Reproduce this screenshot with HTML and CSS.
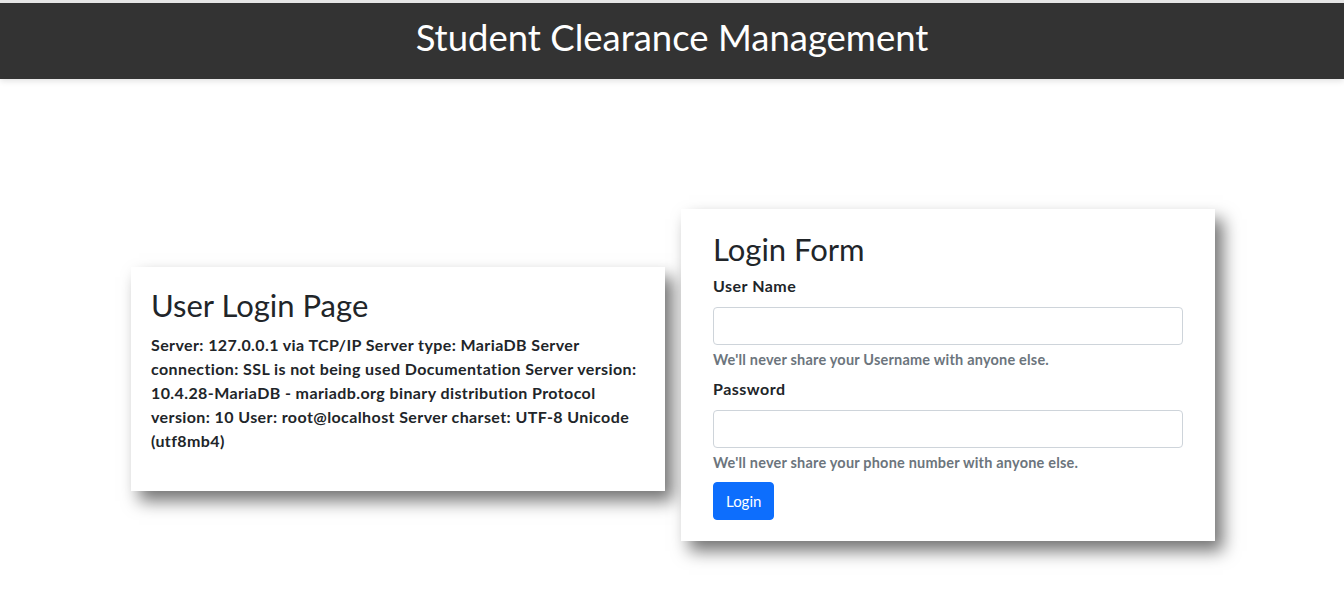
FILE: index.html
```html
<!DOCTYPE html>
<html lang="en">
<head>
<meta charset="utf-8">
<title>Student Clearance Management</title>
<link rel="stylesheet" href="styles.css">
</head>
<body>
<header class="topbar">
  <h1 class="topbar-title">Student Clearance Management</h1>
</header>
<main class="main">
  <div class="row">
    <section class="card card-info">
      <h2 class="card-title">User Login Page</h2>
      <p class="info-text">Server: 127.0.0.1 via TCP/IP Server type: MariaDB Server connection: SSL is not being used Documentation Server version: 10.4.28-MariaDB - mariadb.org binary distribution Protocol version: 10 User: root@localhost Server charset: UTF-8 Unicode (utf8mb4)</p>
    </section>
    <section class="card card-form">
      <h2 class="card-title">Login Form</h2>
      <form class="form">
        <div class="field">
          <label class="label" for="user">User Name</label>
          <input class="input" id="user" type="text">
          <div class="help">We'll never share your Username with anyone else.</div>
        </div>
        <div class="field">
          <label class="label" for="pass">Password</label>
          <input class="input" id="pass" type="password">
          <div class="help">We'll never share your phone number with anyone else.</div>
        </div>
        <button class="btn" type="button">Login</button>
      </form>
    </section>
  </div>
</main>
</body>
</html>
```
FILE: styles.css
```css
* { box-sizing: border-box; }
html, body { margin: 0; padding: 0; }
body {
  font-family: Lato, "Open Sans", sans-serif;
  color: #212529;
  background: #fff;
  border-top: 3px solid #e6e6e6;
  min-height: 100vh;
}
.topbar {
  background: #333333;
  height: 76px;
  display: flex;
  align-items: center;
  justify-content: center;
  padding-bottom: 7px;
  box-shadow: 0 2px 6px rgba(0,0,0,0.12);
}
.topbar-title {
  margin: 0;
  color: #fff;
  font-weight: 400;
  font-size: 36.5px;
  line-height: 1;
}
.main {
  padding-top: 130px;
  padding-left: 2px;
  padding-bottom: 50px;
}
.row {
  display: flex;
  justify-content: center;
  align-items: center;
  gap: 16px;
}
.card {
  width: 534px;
  background: #fff;
  box-shadow: 8px 10px 16px rgba(0,0,0,0.55);
}
.card-info {
  padding: 20px 20px 38px;
  margin-top: 8px;
  position: relative;
  z-index: 0;
}
.card-info .card-title { margin-bottom: 9px; }
.card-form {
  padding: 22px 32px 21px;
  position: relative;
  z-index: 1;
}
.card-title {
  margin: 0 0 6px;
  font-weight: 400;
  font-size: 31px;
  line-height: 1.2;
}
.info-text {
  margin: 0;
  font-weight: 700;
  font-size: 16px;
  letter-spacing: 0.4px;
  line-height: 24px;
}
.form { display: flex; flex-direction: column; }
.field { margin-bottom: 7px; }
.label {
  display: block;
  font-weight: 700;
  font-size: 16px;
  letter-spacing: 0.5px;
  line-height: 24px;
  margin-bottom: 9px;
}
.input {
  display: block;
  width: 100%;
  height: 38px;
  border: 1px solid #ced4da;
  border-radius: 4px;
  background: #fff;
  padding: 6px 12px;
  font: inherit;
}
.help {
  margin-top: 4px;
  font-size: 14.5px;
  letter-spacing: 0.2px;
  font-weight: 700;
  color: #6c757d;
  line-height: 21px;
}
.btn {
  align-self: flex-start;
  margin-top: 2px;
  height: 38px;
  padding: 0 12px;
  border: 1px solid #0d6efd;
  border-radius: 4px;
  background: #0d6efd;
  color: #fff;
  font-family: inherit;
  font-size: 15px;
  font-weight: 400;
}
```
